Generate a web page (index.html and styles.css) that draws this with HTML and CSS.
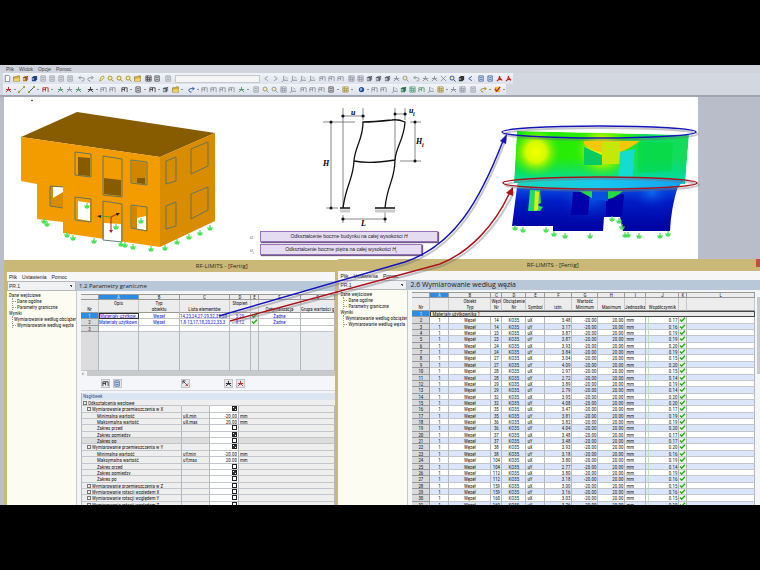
FILE: index.html
```html
<!DOCTYPE html>
<html lang="pl">

<head>
  <meta charset="UTF-8">
  <meta name="viewport" content="width=device-width, initial-scale=1.0">
  <title>RF-LIMITS</title>
  <link rel="stylesheet" href="styles.css">
</head>

<body>

  <!-- Icon symbols -->
  <svg class="symbols" aria-hidden="true">
    <symbol id="tick" viewBox="0 0 8 6"><path d="M1 3l2 2 4-4" fill="none" stroke="#2fa81c" stroke-width="1.7"/></symbol>
    <symbol id="doc" viewBox="0 0 8 8"><path d="M1.5.5h4l1 1v6h-5z" fill="#fff" stroke="#667" stroke-width=".8"/></symbol>
    <symbol id="folder" viewBox="0 0 8 8"><path d="M.5 7V2h3l1-1h3v6z" fill="#d8b23c" stroke="#7a6420" stroke-width=".6"/><path d="M2 4h6L6.5 7H.5z" fill="#f0d36a"/></symbol>
    <symbol id="cube" viewBox="0 0 8 8"><path d="M1 3l2-2h4v4L5 7H1z" fill="currentColor"/><path d="M1 3h4v4M5 3l2-2" fill="none" stroke="#334" stroke-width=".7"/><path d="M1.500 3.500h2v2h-2z" fill="#fff" opacity=".5"/></symbol>
    <symbol id="page" viewBox="0 0 8 8"><path d="M1 1h5v6H1zM2 3h3M2 5h3" fill="#e4e6ee" stroke="currentColor" stroke-width=".8"/></symbol>
    <symbol id="undo" viewBox="0 0 8 8"><path d="M1 3h4q2 0 2 2t-3 2M3 1L1 3l2 2" fill="none" stroke="currentColor"/></symbol>
    <symbol id="redo" viewBox="0 0 8 8"><path d="M7 3H3Q1 3 1 5t3 2M5 1l2 2-2 2" fill="none" stroke="currentColor"/></symbol>
    <symbol id="pen" viewBox="0 0 8 8"><path d="M2 7l1-4 3-2 1 2-3 3z" fill="#f2ec9c" stroke="currentColor" stroke-width=".8"/></symbol>
    <symbol id="lens" viewBox="0 0 8 8"><circle cx="3.500" cy="3.500" r="2.300" fill="#f5eeb0" stroke="currentColor"/><path d="M5 5l2.500 2.500" stroke="currentColor"/></symbol>
    <symbol id="grid" viewBox="0 0 8 8"><path d="M1 1h6v6H1zM1 3h6M3 1v6M5 3v4M1 5h6" fill="#eef" stroke="currentColor" stroke-width=".8"/></symbol>
    <symbol id="left" viewBox="0 0 8 8"><path d="M5.500 1.500L2 4l3.500 2.500" fill="none" stroke="currentColor"/></symbol>
    <symbol id="right" viewBox="0 0 8 8"><path d="M2.500 1.500L6 4 2.500 6.500" fill="none" stroke="currentColor"/></symbol>
    <symbol id="axis" viewBox="0 0 8 8"><path d="M3 1v5h5M3 6L1 8M5 2l2 2" fill="none" stroke="currentColor"/></symbol>
    <symbol id="beam" viewBox="0 0 8 8"><path d="M1 7V2h6v5M4 2v4M1 4h3" fill="none" stroke="currentColor" stroke-width=".9"/></symbol>
    <symbol id="node" viewBox="0 0 8 8"><path d="M4 1v3M1 7l3-3 3 3M1 4h6" fill="none" stroke="currentColor"/><circle cx="4" cy="4" r="1" fill="currentColor"/></symbol>
    <symbol id="line" viewBox="0 0 8 8"><path d="M1 7l6-6" stroke="currentColor" stroke-width=".9"/><path d="M0 6h2v2H0zM6 0h2v2H6z" fill="#8a9a30"/></symbol>
    <symbol id="cross" viewBox="0 0 8 8"><path d="M1 1l6 6M7 1L1 7" stroke="currentColor"/></symbol>
    <symbol id="pick" viewBox="0 0 8 8"><path d="M1 1l3 3M1 1v3M1 1h3" stroke="#333" fill="none"/><path d="M4 4l3 3M7 4L4 7" stroke="currentColor"/></symbol>
    <symbol id="ball" viewBox="0 0 8 8"><circle cx="4" cy="4" r="3" fill="currentColor"/><path d="M2 3l2-1 1 2-2 2z" fill="#fff" opacity=".6"/></symbol>
    <symbol id="pdf" viewBox="0 0 8 8"><path d="M4 1q0 4-3 6M4 1q0 3 3 5Q4 4 1 7" fill="none" stroke="currentColor" stroke-width="1.200"/></symbol>
    <symbol id="check" viewBox="0 0 8 8"><path d="M1 1h6v6H1z" fill="#e8c02c"/><path d="M1 3l2 3 4-5" fill="none" stroke="currentColor" stroke-width="1.300"/></symbol>
    <symbol id="support" viewBox="-4 -4 8 8"><path d="M0-3V3M-3 0H3M-2 2L0 0l2 2" fill="none" stroke="#3be04a" stroke-width="1.100"/></symbol>
  </svg>

  <main class="app">
    <nav class="menu menu-app">
      <a href="#">Plik</a><a href="#">Widok</a><a href="#">Opcje</a><a href="#">Pomoc</a>
    </nav>

    <div class="toolbars">
      <div class="toolbar" id="toolbarMain"></div>
      <div class="toolbar" id="toolbarModel"></div>
    </div>

    <section class="workspace">
      <div class="canvas">
        <svg class="drawing" viewBox="4 97 694 163" preserveAspectRatio="none">
          <defs>
            <radialGradient id="hot"><stop offset="0" stop-color="#f6ff00"/><stop offset=".4" stop-color="#d4fa00"/><stop offset="1" stop-color="#2ee80c" stop-opacity="0"/></radialGradient>
            <radialGradient id="cool"><stop offset="0" stop-color="#0a6cf0"/><stop offset="1" stop-color="#0020c8" stop-opacity="0"/></radialGradient>
            <linearGradient id="upper"><stop offset="0" stop-color="#14e80e"/><stop offset=".6" stop-color="#38f000"/><stop offset=".75" stop-color="#0cdc60"/><stop offset="1" stop-color="#14dc58"/></linearGradient>
            <linearGradient id="fade" x2="0" y2="1"><stop offset=".5" stop-color="#00d8a0" stop-opacity="0"/><stop offset="1" stop-color="#00dcb4"/></linearGradient>
            <linearGradient id="lower" x2="0" y2="1"><stop offset="0" stop-color="#0a54e8"/><stop offset=".35" stop-color="#001cc4"/><stop offset="1" stop-color="#0000a0"/></linearGradient>
            <linearGradient id="ring"><stop offset="0" stop-color="#18d8b8"/><stop offset=".5" stop-color="#18c8f0"/><stop offset="1" stop-color="#14a0f0"/></linearGradient>
            <clipPath id="storey"><path d="M517 131l172 4-4 49-171-1z"/></clipPath>
            <clipPath id="ground"><path d="M517 187l161-1q-7 22-8 45h-47l-3-14h-16l-1 14h-50v-5h-41z"/></clipPath>
          </defs>

          <circle cx="32" cy="100.500" r=".7"/>

          <!-- Building model -->
          <g>
            <path d="M77 112l138 21-55 24L21 137z" fill="#875c00"/>
            <path d="M21 137l139 20v90l-97-14v-11l-26-3v-35l-16-3z" fill="#f29c00"/>
            <path d="M160 157l55-24v88l-55 26z" fill="#d98c00"/>
            <path d="M78 157l12 1v18l-12-1zM104 178l17 2v16l-17-2z" fill="#875c00"/>
            <path d="M132 161l14 2v21l-14-2z" fill="#cf8600"/>
            <path d="M137 178h8v6l-8-1z" fill="#875c00"/>
            <path d="M50 186l13 1v21l-13-2z" fill="#d98c00"/>
            <path d="M53 187h10v5l-10 6zM78 201l12 2v18l-12-2zM104 223l17 1v18l-17-2zM137 218l9-2v14l-9-1z" fill="#fff"/>
            <path d="M132 206l5 1v22l-5-1z" fill="#cf8600"/>
            <path d="M75 152l16 2v23l-16-2zM103 156l19 3v38l-19-2zM131 160l16 2v23l-16-2zM63 187l-13-1v20l13 2M75 197l16 2v23l-16-2zM103 201l19 3v38l-19-2zM131 205l16 2v24l-16-3zM166 161l10-4v24l-10 3zM191 149l17-7v24l-17 8zM166 206l10-4v24l-10 3zM191 194l17-7v23l-17 9z" fill="none" stroke="#557263" stroke-width=".9"/>
            <path d="M111 217l-10-1" stroke="#5c9c20"/>
            <path d="M111 217l6-3M111 217v15" stroke="#b0201c"/>
            <path d="M101 215l-4 1 4 2zM116 213l4 0-3 3z" fill="#222"/>
            <path d="M109 230h4l-2 3z" fill="#b0201c"/>
            <g id="modelSupports"></g>
          </g>

          <!-- Storey drift scheme -->
          <g fill="none" stroke="#555" stroke-width=".7">
            <path d="M331 121v87M323 122h32M326 208h12M343 108v100M341 116h24M363 108v12M395 108v52M405 108v12M395 114h12M415 121v41M410 122h11M400 161h21M343 215v8M385 212v11M341 219h46"/>
            <path d="M343 208C346 185 353 180 354 161C355 146 363 140 363 122Q373 122 392 120Q398 119 405 122C404 140 396 146 395 160C395 180 387 185 385 208M354 161Q370 164 395 160M340 208h10M375 208h20" stroke="#111" stroke-width="1.300"/>
            <path d="M340 211h10M375 211h20" stroke="#ccc" stroke-width="3"/>
          </g>
          <g fill="#111">
            <circle cx="331" cy="122" r="1.500"/><circle cx="331" cy="208" r="1.500"/><circle cx="343" cy="116" r="1.500"/><circle cx="363" cy="116" r="1.500"/>
            <circle cx="395" cy="114" r="1.500"/><circle cx="405" cy="114" r="1.500"/><circle cx="415" cy="122" r="1.500"/><circle cx="415" cy="161" r="1.500"/>
            <circle cx="343" cy="219" r="1.500"/><circle cx="385" cy="219" r="1.500"/>
          </g>
          <g class="dims">
            <text x="323" y="166">H</text><text x="351" y="115">u</text><text x="409" y="113">u</text><text x="413" y="116" class="sub">i</text>
            <text x="416" y="144">H</text><text x="422" y="147" class="sub">i</text><text x="361" y="226">L</text>
          </g>

          <!-- Deformation results -->
          <g>
            <g clip-path="url(#storey)">
              <path d="M517 131l172 4-4 49-171-1z" fill="url(#upper)"/>
              <path d="M517 131l172 4-4 49-171-1z" fill="url(#fade)"/>
              <circle cx="536" cy="152" r="26" fill="url(#hot)"/>
              <ellipse cx="602" cy="150" rx="28" ry="28" fill="url(#hot)"/>
              <path d="M584 141h56q-14 10-24 12v-9h-14v9q-12-3-18-9z" fill="#f4c808"/>
              <path d="M602 142h18v22h-18z" fill="#c4e808"/>
              <path d="M584 147l18 8v10h-18z" fill="#08cc60"/>
              <path d="M620 152l15-3-3 33h-14z" fill="#14dcd0"/>
              <path d="M638 142l35 1-2 28-33 2z" fill="#04d838" opacity=".5"/>
            </g>
            <g clip-path="url(#ground)">
              <path d="M512 186h166v45H512z" fill="url(#lower)"/>
              <ellipse cx="590" cy="194" rx="35" ry="28" fill="url(#cool)"/>
              <ellipse cx="652" cy="192" rx="22" ry="18" fill="url(#cool)"/>
              <path d="M573 192h17l-2 23h-17zM606 196l18-2-2 22h-16z" fill="#0000a8"/>
              <path d="M530 190h10l1 13-4 2 6 2-3 4h-12z" fill="#20dc60"/>
              <path d="M535 191l4 1-1 18-4 1z" fill="#e0ec10"/>
              <path d="M579 191h44q-8 7-15 8v-7h-16v6z" fill="#20dc40"/>
              <path d="M592 191h16v10l-16-2z" fill="#0850e0"/>
            </g>
            <path d="M518 179q80-4 166 0l-6 9q-80 4-161 0z" fill="url(#ring)"/>
            <g id="resultSupports"></g>
          </g>
        </svg>

        <ul class="callouts">
          <li><i>u</i><span class="callout callout-wide">Odkształcenie boczne budynku na całej wysokości <em>H</em></span></li>
          <li><i>u<sub>i</sub></i><span class="callout">Odkształcenie boczne piętra na całej wysokości <em>H<sub>i</sub></em></span></li>
        </ul>
      </div>
    </section>

    <section class="windows">
      <!-- 1.2 Parametry graniczne -->
      <article class="window window-input">
        <header class="titlebar">RF-LIMITS - [Fertig]</header>
        <nav class="menu"><a href="#">Plik</a><a href="#">Ustawienia</a><a href="#">Pomoc</a></nav>
        <div class="window-body">
          <aside class="sidebar">
            <select aria-label="Przypadek"><option>PR.1</option></select>
            <ul class="tree">
              <li>Dane wejściowe
                <ul><li>Dane ogólne</li><li>Parametry graniczne</li></ul>
              </li>
              <li>Wyniki
                <ul><li>Wymiarowanie według obciążer</li><li>Wymiarowanie według węzła</li></ul>
              </li>
            </ul>
          </aside>
          <div class="pane">
            <h2>1.2 Parametry graniczne</h2>
            <div class="limits">
              <table class="sheet sheet-limits">
                <thead>
                  <tr class="letters"><th></th><th class="active">A</th><th>B</th><th>C</th><th>D</th><th>E</th><th>F</th><th>G</th></tr>
                  <tr class="labels"><th>Nr</th><th>Opis<br>&nbsp;</th><th>Typ<br>obiektu</th><th>Lista elementów</th><th>Stopień<br>&nbsp;</th><th></th><th>Optymalizacja</th><th>Grupa wartości g</th></tr>
                </thead>
                <tbody>
                  <tr><th class="active">1</th><td class="selected">Materiały użytkow...</td><td class="center">Węzeł</td><td>14,23,24,27-29,32,35-38</td><td class="center">5:20</td><td class="mark"><svg><use href="#tick"/></svg></td><td class="center">Żadne</td><td></td></tr>
                  <tr><th>2</th><td>Materiały użytkown</td><td class="center">Węzeł</td><td>1,8-13,17,18,20,22,33,3</td><td class="center">8:12</td><td class="mark"><svg><use href="#tick"/></svg></td><td class="center">Żadne</td><td></td></tr>
                  <tr><th>3</th><td></td><td></td><td></td><td></td><td></td><td></td><td></td></tr>
                </tbody>
                <tfoot>
                  <tr><td></td><td></td><td></td><td></td><td></td><td></td><td></td><td></td></tr>
                </tfoot>
              </table>
              <div class="scroll-x">‹</div>
            </div>
            <div class="actions">
              <button type="button" aria-label="Sortuj"><svg><use href="#beam"/></svg></button>
              <button type="button" class="blue" aria-label="Zapisz"><svg><use href="#page"/></svg></button>
              <button type="button" class="pick" aria-label="Wybierz"><svg><use href="#pick"/></svg></button>
              <button type="button" class="pick-all" aria-label="Wybierz wszystko"><svg><use href="#node"/></svg></button>
              <button type="button" class="red" aria-label="Usuń"><svg><use href="#node"/></svg></button>
            </div>
            <table class="params">
              <caption>Nagłówek</caption>
              <tbody id="paramRows"></tbody>
            </table>
          </div>
        </div>
      </article>

      <!-- 2.6 Wymiarowanie według węzła -->
      <article class="window window-result">
        <header class="titlebar">RF-LIMITS - [Fertig]<button type="button" class="close" aria-label="Zamknij"></button></header>
        <nav class="menu"><a href="#">Plik</a><a href="#">Ustawienia</a><a href="#">Pomoc</a></nav>
        <div class="window-body">
          <aside class="sidebar">
            <select aria-label="Przypadek"><option>PR.1</option></select>
            <ul class="tree">
              <li>Dane wejściowe
                <ul><li>Dane ogólne</li><li>Parametry graniczne</li></ul>
              </li>
              <li>Wyniki
                <ul><li>Wymiarowanie według obciążer</li><li>Wymiarowanie według węzła</li></ul>
              </li>
            </ul>
          </aside>
          <div class="pane">
            <h2>2.6 Wymiarowanie według węzła</h2>
            <div class="results">
              <table class="sheet sheet-results">
                <thead>
                  <tr class="letters"><th></th><th class="active">A</th><th>B</th><th>C</th><th>D</th><th>E</th><th>F</th><th>G</th><th>H</th><th>I</th><th>J</th><th>K</th><th>L</th></tr>
                  <tr class="labels"><th>Nr</th><th></th><th>Obiekt<br>Typ</th><th>Węzł<br>Nr</th><th>Obciążenie<br>Nr</th><th>Symbol</th><th>istn.</th><th>Wartość<br>Minimum</th><th>Maximum</th><th>Jednostka</th><th>Współczynnik</th><th></th><th></th></tr>
                </thead>
                <tbody id="resultRows">
                  <tr class="group"><th class="active">1</th><td>Materiały użytkownika 1</td></tr>
                </tbody>
              </table>
              <div class="scroll-y"></div>
            </div>
          </div>
        </div>
      </article>
    </section>

    <!-- Links between the lists and the storeys -->
    <svg class="links" viewBox="0 65 760 440" preserveAspectRatio="none">
      <g fill="none" stroke="#70707a" stroke-opacity=".4" stroke-width="2">
        <path d="M221 318L407 264C457 247 482 202 506 139M232 323L442 266C472 254 497 227 514 192"/>
        <ellipse cx="601" cy="134" rx="97" ry="6"/><ellipse cx="602" cy="185" rx="97" ry="6"/>
      </g>
      <g fill="none" stroke="#1414b8" stroke-width="1.500">
        <path d="M219 316L405 262C455 245 480 200 503 141"/>
        <ellipse cx="599" cy="132" rx="97" ry="6"/>
      </g>
      <path d="M507 134l-1 10-6-3z" fill="#1414b8"/>
      <g fill="none" stroke="#a8141c" stroke-width="1.500">
        <path d="M230 321L440 264C470 252 495 225 510 192"/>
        <ellipse cx="600" cy="183" rx="97" ry="6"/>
      </g>
      <path d="M513 187l0 9-7-3z" fill="#a8141c"/>
    </svg>
  </main>

  <script src="script.js"></script>
</body>

</html>
```
FILE: styles.css
```css
* {
  box-sizing: border-box;
}

body {
  margin: 0;
  padding: 65px 0;
  height: 100vh;
  background: #000;
  color: #222;
  font-family: "Liberation Sans", Arial, sans-serif;
  font-size: 5px;
  line-height: 6px;
}

.symbols {
  position: absolute;
  width: 0;
  height: 0;
}

ul {
  list-style: none;
  margin: 0;
  padding: 0;
}

a {
  color: inherit;
  text-decoration: none;
}

button {
  padding: 0;
  border: 0;
  background: none;
  color: inherit;
}

.app {
  position: relative;
  display: flex;
  flex-direction: column;
  height: 100%;
  overflow: hidden;
  background: #b9bdc9;
}

/* Menus and toolbars */
.menu {
  display: flex;
  flex: none;
  align-items: center;
  gap: 5px;
  height: 9px;
  padding: 0 2px;
  background: #f6f6f7;
}

.menu-app {
  height: 8px;
  padding: 0 6px;
  background: #d0d3dc;
  color: #444;
}

.toolbars {
  flex: none;
  height: 24px;
  padding: 0 3px;
  border-bottom: 2px solid #a2a6b2;
  background: #d3d7e0;
}

.toolbar {
  display: flex;
  align-items: center;
  gap: 2px;
  width: max-content;
  height: 11px;
  background: linear-gradient(#f1f4f9, #dde1ea);
}

.tool-group {
  display: flex;
}

.tool {
  display: flex;
  align-items: center;
  justify-content: center;
  width: 9px;
  height: 9px;
  color: #8a8e9a;
}

.tool svg {
  width: 7px;
  height: 7px;
}

.tool-menu {
  width: 14px;
  gap: 2px;
}

.tool-menu::after {
  content: "";
  border: 1px solid transparent;
  border-top-color: #333;
}

.blue { color: #1c4c98; }
.gold { color: #a08a20; }
.orange { color: #c88420; }
.dark { color: #333; }
.red { color: #c01c1c; }
.green { color: #4a9468; }

.toolbar select {
  width: 85px;
  height: 8px;
  border: 1px solid #c4c8d0;
  background: #f5f5f6;
  appearance: none;
}

/* Drawing area */
.workspace {
  display: flex;
  flex: none;
  height: 163px;
  padding-left: 4px;
}

.workspace::after {
  content: "";
  flex: 62;
}

.canvas {
  position: relative;
  flex: 694;
  background: #fff;
}

.drawing {
  display: block;
  width: 100%;
  height: 100%;
}

.dims {
  font: italic bold 8px "Liberation Serif", serif;
}

.dims .sub {
  font-size: 6px;
}

.callouts {
  position: absolute;
  left: 246px;
  bottom: 5px;
  display: grid;
  gap: 2px;
}

.callouts li {
  display: flex;
  align-items: center;
  gap: 1px;
}

.callouts i {
  width: 9px;
  color: #666;
}

.callout {
  width: 162px;
  height: 11px;
  border: 1px solid #9a70b8;
  background: #e6dcf2;
  box-shadow: 1px 1px 1px #6c5c80;
  line-height: 9px;
  text-align: center;
  white-space: nowrap;
}

.callout-wide {
  width: 178px;
}

sub {
  font-size: 4px;
  line-height: 0;
}

/* Windows */
.windows {
  display: flex;
  flex: 1;
  min-height: 0;
  padding-left: 4px;
}

.window {
  display: flex;
  flex-direction: column;
  min-width: 0;
  overflow: hidden;
  border-left: 3px solid #c9b877;
  background: #f4f5f7;
}

.window-input {
  flex: 331;
}

.window-result {
  flex: 425;
  margin-top: -1px;
}

.titlebar {
  position: relative;
  flex: none;
  height: 12px;
  background: #c9b877;
  color: #2c2818;
  font-family: "Open Sans", sans-serif;
  font-size: 6px;
  line-height: 12px;
  text-align: center;
}

.window-input .titlebar {
  padding-left: 101px;
}

.window-result .titlebar {
  padding-left: 7px;
}

.close {
  position: absolute;
  top: 0;
  right: 0;
  width: 4px;
  height: 8px;
  background: #c84a44;
}

.window-body {
  display: flex;
  flex: 1;
  min-height: 0;
}

.sidebar {
  flex: none;
  width: 70px;
  overflow: hidden;
  border-right: 1px solid #c8c8c8;
  background: #fcfcf2;
}

.sidebar select {
  display: block;
  width: 100%;
  height: 10px;
  padding: 0 1px;
  border: 1px solid #b4b8be;
  background: #f0f1f3 linear-gradient(45deg, transparent 50%, #444 50%) right 3px center / 2px 2px no-repeat;
  color: #333;
  font: 5px "Liberation Sans", sans-serif;
  appearance: none;
}

.tree {
  padding: 1px 0 0 2px;
  font-family: "Roboto Condensed", Roboto, sans-serif;
  white-space: nowrap;
}

.tree ul {
  margin-left: 3px;
  border-left: 1px dotted #999;
}

.tree ul li {
  display: flex;
  align-items: center;
  gap: 1px;
}

.tree ul li::before {
  content: "";
  width: 3px;
  border-top: 1px dotted #999;
}

.pane {
  display: flex;
  flex: 1;
  flex-direction: column;
  min-width: 0;
}

h2 {
  flex: none;
  height: 10px;
  margin: 0;
  padding-left: 2px;
  background: #b8c8d8;
  font: 6px/10px "Open Sans", sans-serif;
}

.window-result h2 {
  font-size: 7px;
}

/* Sheets */
table {
  display: block;
  font-family: "Roboto Condensed", Roboto, sans-serif;
}

thead, tfoot {
  display: block;
}

tbody {
  display: grid;
  grid-auto-rows: 1fr;
}

.sheet tr {
  display: grid;
  min-height: 0;
}

.sheet-limits tr {
  grid-template-columns: 18px 40px 41px 50px 21px 8px 42px 1fr;
}

.sheet-results tr {
  grid-template-columns: 18px 19px 42px 11px 24px 19px 27px 26px 27px 21px 33px 8px 1fr;
}

th, td {
  min-width: 0;
  padding: 0 1px;
  overflow: hidden;
  border-right: 1px solid #b4b8bc;
  border-bottom: 1px solid #c2c5ca;
  font-weight: normal;
  text-align: left;
  white-space: nowrap;
}

.sheet th {
  padding: 0;
  border-color: #999;
  background: #ececed;
  text-align: center;
}

.sheet .letters th {
  height: 6px;
  line-height: 5px;
  border-top: 1px solid #999;
}

.sheet .labels th {
  display: flex;
  align-items: flex-end;
  justify-content: center;
  height: 13px;
  border-right-color: #c8c8ca;
}

.sheet .active {
  background: #2c8ce4;
  color: #d8ecff;
}

.sheet tbody th {
  background: #d8d9db;
}

.sheet .center {
  padding: 0;
  text-align: center;
}

.number {
  text-align: right;
}

.mark {
  padding: 0;
  background: #e8f6e4;
}

.mark svg {
  display: block;
  width: 7px;
  height: 5px;
}

.limits {
  margin: 3px 0 0 4px;
}

.sheet-limits tbody {
  height: 19px;
  background: #fff;
  color: #2828d0;
}

.sheet-limits tbody th {
  color: #333;
}

.sheet-limits tbody td {
  padding: 0;
}

.sheet-limits .selected {
  border: 1px solid #333;
  line-height: 4px;
}

.sheet-limits tfoot td {
  height: 39px;
  background: #e6eaec;
}

.sheet-limits tfoot td:first-child {
  background: #dcdcde;
}

.scroll-x {
  height: 5px;
  padding-left: 1px;
  background: linear-gradient(90deg, #f4f4f4 6px, #c8c9cb 6px);
  line-height: 4px;
}

.actions {
  display: flex;
  gap: 3px;
  margin: 1px 0 2px 4px;
  padding: 2px 0 2px 20px;
  border-bottom: 1px solid #d4d8dc;
  background: #f4f6fa;
}

.actions button {
  display: flex;
  align-items: center;
  justify-content: center;
  width: 9px;
  height: 9px;
  border: 1px solid #c4c4c8;
  background: #e8e8ea;
}

.actions svg {
  width: 7px;
  height: 7px;
}

.actions .pick {
  margin-left: 56px;
  color: #a03038;
}

.actions .pick-all {
  margin-left: 31px;
}

/* Parameters */
.params {
  margin-left: 4px;
  border-left: 1px solid #b4b8bc;
}

.params caption {
  display: block;
  height: 7px;
  padding-left: 1px;
  background: #dce6f2;
  color: #3c5a8c;
  text-align: left;
}

.params tbody {
  height: 108px;
}

.params tr {
  display: grid;
  grid-template-columns: 100px 28px 29px 1fr;
  min-height: 0;
  background: #eeeeef;
}

.params td:nth-child(3) {
  display: flex;
  justify-content: flex-end;
  background: #fff;
}

.params .section td {
  background: #eeeeef;
  border-right-color: transparent;
}

.params .current {
  background: #dcdcdd;
}

.params .level-1 td:first-child {
  padding-left: 5px;
}

.params .level-2 td:first-child {
  padding-left: 15px;
}

.toggle {
  display: inline-block;
  width: 4px;
  height: 4px;
  margin-right: 1px;
  border: 1px solid #777;
}

.params input {
  width: 5px;
  height: 5px;
  margin: 0;
  border: 1px solid #222;
  background: #fff;
  appearance: none;
}

.params input:checked {
  background: linear-gradient(135deg, #fff 30%, #333 30%, #333 70%, #fff 70%);
}

/* Results */
.results {
  display: flex;
  flex: 1;
  min-height: 0;
  gap: 2px;
  margin: 2px 0 0 4px;
}

.sheet-results {
  flex: 1;
}

.sheet-results tbody {
  height: 197px;
  background: #fff;
}

.sheet-results tbody tr:nth-child(odd) {
  background: #dbe6fa;
}

.sheet-results .group {
  grid-template-columns: 18px 1fr;
}

.sheet-results .group td {
  border: 1px solid #444;
  background: #e8e8e9;
  line-height: 5px;
}

.ratio {
  background: linear-gradient(90deg, transparent 2px, #b4ecb8 2px, #b4ecb8 3px, transparent 3px);
}

.scroll-y {
  width: 3px;
  height: 77px;
  margin-top: 5px;
  background: #c9cacc;
}

/* Arrows over the windows */
.links {
  position: absolute;
  top: 0;
  left: 0;
  width: 100%;
  height: 100%;
  pointer-events: none;
}
```
FILE: script.js
```javascript
// Toolbars: icon.color, "+" marks a button with a menu
var mainTools = [
  "doc folder cube.orange cube.blue page page page page",
  "undo redo",
  "pen.gold lens.gold lens.gold lens.gold folder",
  "grid.dark page.dark",
  "page",
  "select",
  "left right axis axis axis axis",
  "beam beam beam",
  "grid grid cube cube cube node lens",
  "undo node node cross lens.blue cube.dark left.blue",
  "page.blue page.blue pdf.red pdf.red"
];

var modelTools = [
  "node.red+ line.gold line.dark+ beam.red+",
  "node.green node node.green",
  "node.dark+ beam beam",
  "beam.dark+ page.dark+ beam.dark+ cube folder.dark+",
  "redo.blue+ beam beam beam beam node.green+",
  "page lens lens grid axis",
  "beam beam beam page.dark+ grid.gold+",
  "ball.blue+ beam beam",
  "axis cube.green grid.green beam.green axis grid.gold+ node grid",
  "page redo.gold+ check.red+"
];

function buildToolbar(id, groups) {
  var html = "";
  groups.forEach(function (group) {
    if (group === "select") {
      html += '<select aria-label="Przypadek obciążenia"><option></option></select>';
      return;
    }
    html += '<div class="tool-group">';
    group.split(" ").forEach(function (tool) {
      var parts = tool.replace("+", "").split(".");
      var menu = tool.indexOf("+") > 0 ? " tool-menu" : "";
      html += '<button type="button" class="tool ' + (parts[1] || "") + menu + '" aria-label="' + parts[0] + '"><svg><use href="#' + parts[0] + '"/></svg></button>';
    });
    html += "</div>";
  });
  document.getElementById(id).innerHTML = html;
}

// Supports below the walls
function buildSupports(id, points) {
  document.getElementById(id).innerHTML = points.map(function (p) {
    return '<use href="#support" x="' + (p[0] - 4) + '" y="' + (p[1] - 4) + '" width="8" height="8"/>';
  }).join("");
}

// Node, then existing value and ratio for uX and uY
var results = [
  [14, "3.48", "0.17", "3.17", "0.16"],
  [23, "3.87", "0.19", "3.87", "0.19"],
  [24, "3.93", "0.20", "3.84", "0.19"],
  [27, "3.04", "0.15", "4.09", "0.20"],
  [28, "2.97", "0.15", "2.72", "0.14"],
  [29, "3.89", "0.19", "2.79", "0.14"],
  [32, "3.95", "0.20", "4.08", "0.20"],
  [35, "3.47", "0.17", "3.81", "0.19"],
  [36, "3.82", "0.19", "4.04", "0.20"],
  [37, "3.48", "0.17", "3.48", "0.17"],
  [38, "3.93", "0.20", "3.18", "0.16"],
  [104, "3.80", "0.19", "2.77", "0.14"],
  [112, "3.80", "0.19", "3.18", "0.16"],
  [159, "3.00", "0.15", "3.16", "0.16"],
  [160, "3.03", "0.15", "3.76", "0.19"]
];

function buildResults() {
  var html = "";
  var nr = 2;
  results.forEach(function (r) {
    ["uX", "uY"].forEach(function (symbol, i) {
      html += "<tr><th>" + nr + '</th><td class="center">1</td><td class="center">Węzeł</td><td class="center">' + r[0] +
        '</td><td class="center">KO35</td><td>' + symbol + '</td><td class="number">' + r[1 + i * 2] +
        '</td><td class="number">-20.00</td><td class="number">20.00</td><td>mm</td><td class="number ratio">' + r[2 + i * 2] +
        '</td><td class="mark"><svg><use href="#tick"/></svg></td><td></td></tr>';
      nr++;
    });
  });
  document.getElementById("resultRows").innerHTML += html;
}

// Level, label, symbol, value (true/false is a tick box)
var params = [
  [0, "Odkształcenia węzłowe"],
  [1, "Wymiarowanie przemieszczenia w X", "", true],
  [2, "Minimalna wartość", "uX,min", "-20.00"],
  [2, "Maksymalna wartość", "uX,max", "20.00"],
  [2, "Zakres przed", "", false],
  [2, "Zakres pomiędzy", "", true],
  [2, "Zakres po", "", false, "current"],
  [1, "Wymiarowanie przemieszczenia w Y", "", true],
  [2, "Minimalna wartość", "uY,min", "-20.00"],
  [2, "Maksymalna wartość", "uY,max", "20.00"],
  [2, "Zakres przed", "", false],
  [2, "Zakres pomiędzy", "", true],
  [2, "Zakres po", "", false],
  [1, "Wymiarowanie przemieszczenia w Z", "", false],
  [1, "Wymiarowanie rotacji względem X", "", false],
  [1, "Wymiarowanie rotacji względem Y", "", false],
  [1, "Wymiarowanie rotacji względem Z", "", false]
];

function buildParams() {
  var html = "";
  params.forEach(function (p, i) {
    var isBox = typeof p[3] === "boolean";
    var label = (p[0] < 2 ? '<span class="toggle"></span>' : "") + p[1];
    var value = p[3] || "";
    if (isBox) {
      label = '<label for="param' + i + '">' + label + "</label>";
      value = '<input type="checkbox" id="param' + i + '"' + (p[3] ? " checked" : "") + ">";
    }
    html += '<tr class="level-' + p[0] + " " + (p[4] || "") + (p[0] === 0 ? "section" : "") + '"><td>' + label + "</td><td>" + (p[2] || "") +
      "</td><td>" + value + "</td><td>" + (p[2] ? "mm" : "") + "</td></tr>";
  });
  document.getElementById("paramRows").innerHTML = html;
}

buildToolbar("toolbarMain", mainTools);
buildToolbar("toolbarModel", modelTools);
buildSupports("modelSupports", [[44, 221], [47, 224], [67, 235], [73, 238], [94, 241], [121, 244], [125, 245], [133, 247], [151, 249], [165, 248], [177, 242], [189, 237], [200, 233], [210, 228], [87, 206], [116, 227], [141, 221]]);
buildSupports("resultSupports", [[515, 228], [523, 230], [546, 230], [554, 234], [565, 236], [590, 236], [612, 219], [619, 221], [622, 227], [625, 235], [628, 235], [639, 236], [660, 236], [668, 234]]);
buildResults();
buildParams();
```
